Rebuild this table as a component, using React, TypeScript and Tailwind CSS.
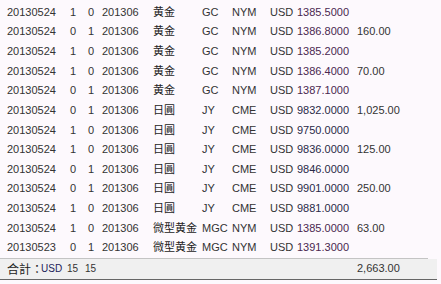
import React from "react";

type Row = [string, string, string, string, string, string, string, string, string, string];

const rows: Row[] = [
  ["20130524", "1", "0", "201306", "黄金", "GC", "NYM", "USD", "1385.5000", ""],
  ["20130524", "0", "1", "201306", "黄金", "GC", "NYM", "USD", "1386.8000", "160.00"],
  ["20130524", "1", "0", "201306", "黄金", "GC", "NYM", "USD", "1385.2000", ""],
  ["20130524", "1", "0", "201306", "黄金", "GC", "NYM", "USD", "1386.4000", "70.00"],
  ["20130524", "0", "1", "201306", "黄金", "GC", "NYM", "USD", "1387.1000", ""],
  ["20130524", "0", "1", "201306", "日圓", "JY", "CME", "USD", "9832.0000", "1,025.00"],
  ["20130524", "1", "0", "201306", "日圓", "JY", "CME", "USD", "9750.0000", ""],
  ["20130524", "1", "0", "201306", "日圓", "JY", "CME", "USD", "9836.0000", "125.00"],
  ["20130524", "0", "1", "201306", "日圓", "JY", "CME", "USD", "9846.0000", ""],
  ["20130524", "0", "1", "201306", "日圓", "JY", "CME", "USD", "9901.0000", "250.00"],
  ["20130524", "1", "0", "201306", "日圓", "JY", "CME", "USD", "9881.0000", ""],
  ["20130524", "1", "0", "201306", "微型黄金", "MGC", "NYM", "USD", "1385.0000", "63.00"],
  ["20130523", "0", "1", "201306", "微型黄金", "MGC", "NYM", "USD", "1391.3000", ""],
];

const font = { fontFamily: '"Liberation Sans", Arial, "Noto Sans CJK TC", sans-serif' };
const cjk = { fontFamily: '"Noto Sans CJK TC", "Noto Sans CJK SC", sans-serif' };

export default function App() {
  return (
    <div className="w-[441px] h-[284px] bg-[#fdf9fd] text-[11px] text-[#333]" style={font}>
      <div className="w-[428px] pt-[2px] border-b border-[#c4c4c4]">
        {rows.map((r, i) => {
          const gold = r[5] !== "JY";
          return (
            <div key={i} className="flex items-center h-[19.67px] pl-[7px] whitespace-nowrap">
              <div className="w-[63px]">{r[0]}</div>
              <div className="w-[18px]">{r[1]}</div>
              <div className="w-[14px]">{r[2]}</div>
              <div className="w-[51px]">{r[3]}</div>
              <div className="w-[49px] text-[11px] text-[#222] -mt-[2px]" style={cjk}>
                {r[4]}
              </div>
              <div className="w-[30px]">{r[5]}</div>
              <div className="w-[38px]">{r[6]}</div>
              <div className="w-[27px]">{r[7]}</div>
              <div className={`w-[60px] ${gold ? "text-[#4a2850]" : "text-[#2a2a48]"}`}>{r[8]}</div>
              <div>{r[9]}</div>
            </div>
          );
        })}
      </div>
      <div className="w-[437px] h-[21px] bg-[#f0f0f0] border-b border-[#666] flex items-center pl-[7px] whitespace-nowrap">
        <span className="w-[34px] text-[12px] text-[#222]" style={cjk}>
          合計：
        </span>
        <span className="text-[10px] text-[#22225a] w-[26px]">USD</span>
        <span className="text-[10px] w-[18px]">15</span>
        <span className="text-[10px] w-[272px]">15</span>
        <span className="text-[11px]">2,663.00</span>
      </div>
    </div>
  );
}
